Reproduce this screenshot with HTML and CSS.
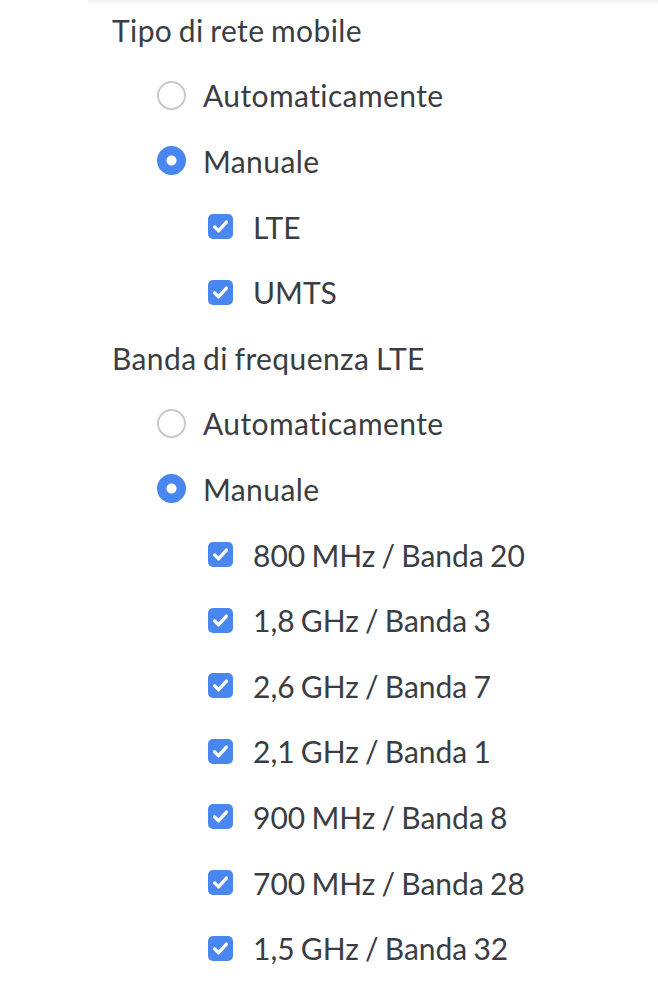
FILE: index.html
```html
<!DOCTYPE html>
<html lang="it">
<head>
    <meta charset="UTF-8">
    <meta name="viewport" content="width=device-width, initial-scale=1.0">
    <title>Rete mobile</title>
    <link rel="stylesheet" href="styles.css">
</head>
<body>
    <div class="panel">
        <div class="options">
            <div class="row heading">Tipo di rete mobile</div>
            <label class="row level-1">
                <span class="radio"></span>
                <span class="label">Automaticamente</span>
            </label>
            <label class="row level-1">
                <span class="radio checked"></span>
                <span class="label">Manuale</span>
            </label>
            <label class="row level-2">
                <span class="check"><svg viewBox="0 0 24 24"><path d="M6.3 12.3l3.8 3.8 7.6-8.3"/></svg></span>
                <span class="label">LTE</span>
            </label>
            <label class="row level-2">
                <span class="check"><svg viewBox="0 0 24 24"><path d="M6.3 12.3l3.8 3.8 7.6-8.3"/></svg></span>
                <span class="label">UMTS</span>
            </label>

            <div class="row heading">Banda di frequenza LTE</div>
            <label class="row level-1">
                <span class="radio"></span>
                <span class="label">Automaticamente</span>
            </label>
            <label class="row level-1">
                <span class="radio checked"></span>
                <span class="label">Manuale</span>
            </label>
            <label class="row level-2">
                <span class="check"><svg viewBox="0 0 24 24"><path d="M6.3 12.3l3.8 3.8 7.6-8.3"/></svg></span>
                <span class="label">800 MHz / Banda 20</span>
            </label>
            <label class="row level-2">
                <span class="check"><svg viewBox="0 0 24 24"><path d="M6.3 12.3l3.8 3.8 7.6-8.3"/></svg></span>
                <span class="label">1,8 GHz / Banda 3</span>
            </label>
            <label class="row level-2">
                <span class="check"><svg viewBox="0 0 24 24"><path d="M6.3 12.3l3.8 3.8 7.6-8.3"/></svg></span>
                <span class="label">2,6 GHz / Banda 7</span>
            </label>
            <label class="row level-2">
                <span class="check"><svg viewBox="0 0 24 24"><path d="M6.3 12.3l3.8 3.8 7.6-8.3"/></svg></span>
                <span class="label">2,1 GHz / Banda 1</span>
            </label>
            <label class="row level-2">
                <span class="check"><svg viewBox="0 0 24 24"><path d="M6.3 12.3l3.8 3.8 7.6-8.3"/></svg></span>
                <span class="label">900 MHz / Banda 8</span>
            </label>
            <label class="row level-2">
                <span class="check"><svg viewBox="0 0 24 24"><path d="M6.3 12.3l3.8 3.8 7.6-8.3"/></svg></span>
                <span class="label">700 MHz / Banda 28</span>
            </label>
            <label class="row level-2">
                <span class="check"><svg viewBox="0 0 24 24"><path d="M6.3 12.3l3.8 3.8 7.6-8.3"/></svg></span>
                <span class="label">1,5 GHz / Banda 32</span>
            </label>
        </div>
    </div>
</body>
</html>
```

FILE: styles.css
```css
body {
    margin: 0;
    background: #ffffff;
    font-family: Lato, 'Noto Sans', sans-serif;
    color: #3a3d42;
    overflow: hidden;
}

.panel {
    margin-left: 88px;
    height: 992px;
    background: linear-gradient(to bottom, #e4e4e4 0, #f3f3f3 4px, #ffffff 8px);
}

.options {
    padding-left: 24px;
    margin-top: -3px;
}

.row {
    display: flex;
    align-items: center;
    height: 65.6px;
    font-size: 30px;
    letter-spacing: 0.4px;
    word-spacing: -1.5px;
}

.level-1 {
    padding-left: 45px;
}

.level-2 {
    padding-left: 96px;
}

.level-2 .label {
    letter-spacing: 0;
}

.radio {
    width: 25px;
    height: 25px;
    border: 2px solid #c8c8c8;
    border-radius: 50%;
    margin-right: 17px;
    flex-shrink: 0;
}

.radio.checked {
    border-color: #4a86f0;
    background: radial-gradient(circle, #ffffff 0, #ffffff 4.5px, #4a86f0 5.5px);
}

.check {
    width: 25px;
    height: 25px;
    border-radius: 5px;
    background: #4a86f0;
    margin-right: 20px;
    flex-shrink: 0;
    display: flex;
}

.check svg {
    width: 25px;
    height: 25px;
    fill: none;
    stroke: #ffffff;
    stroke-width: 3.2;
    stroke-linecap: round;
    stroke-linejoin: round;
}
```
